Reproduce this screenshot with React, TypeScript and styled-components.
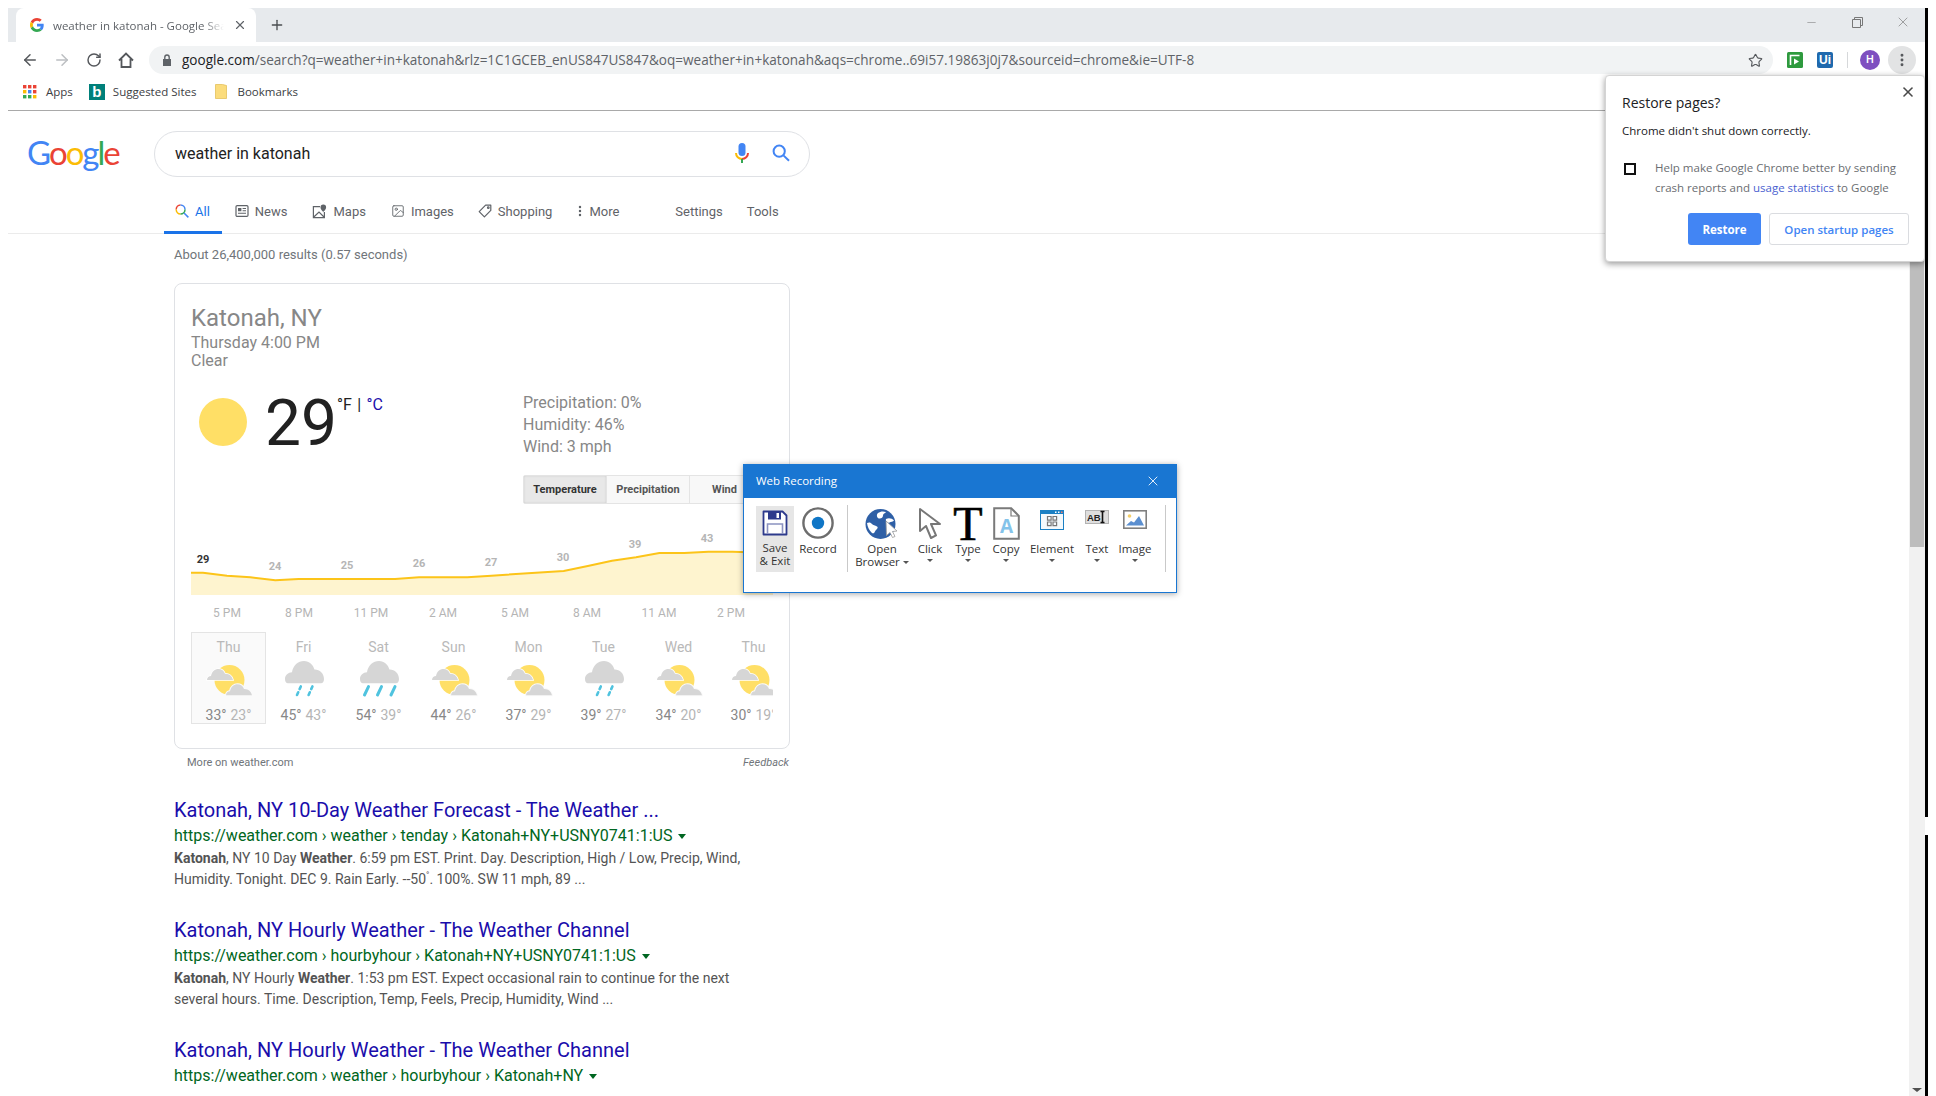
import React from "react";
import styled, { createGlobalStyle } from "styled-components";
import { ArrowLeft, ArrowRight, RotateCw, Star, X, Plus, Minus, MoreVertical, Image as ImageIcon } from "lucide-react";

const GlobalStyle = createGlobalStyle`
  html, body { margin: 0; padding: 0; background: #fff; overflow: hidden; }
  body { font-family: Roboto, "Liberation Sans", sans-serif; }
  * { box-sizing: border-box; }
`;

const UI_FONT = `"Open Sans", "Noto Sans", sans-serif`;

const Screen = styled.div`
  position: relative;
  width: 1936px;
  height: 1096px;
  overflow: hidden;
  display: flex;
  padding: 8px 8px 0 8px;
`;
const Browser = styled.div`
  flex: 1;
  display: flex;
  flex-direction: column;
  min-width: 0;
`;
const Edge = styled.div`
  width: 3px;
  display: flex;
  flex-direction: column;
  gap: 18px;
`;
const EdgeSegment = styled.div<{ $h?: number }>`
  background: #000;
  height: ${p => (p.$h ? `${p.$h}px` : "auto")};
  flex: ${p => (p.$h ? "none" : 1)};
`;

/* tabs */
const TabStrip = styled.div`
  height: 34px;
  background: #e7eaed;
  display: flex;
  padding-left: 8px;
`;
const Tab = styled.div`
  width: 240px;
  height: 34px;
  background: #fff;
  border-radius: 8px 8px 0 0;
  display: flex;
  align-items: center;
  padding-left: 14px;
  gap: 9px;
  font-family: ${UI_FONT};
  font-size: 11.5px;
  color: #5f6368;
`;
const TabTitle = styled.span`
  width: 171px;
  overflow: hidden;
  white-space: nowrap;
  -webkit-mask-image: linear-gradient(90deg, #000 88%, transparent);
  mask-image: linear-gradient(90deg, #000 88%, transparent);
`;
const NewTab = styled.div`
  margin-left: 13px;
  height: 34px;
  display: flex;
  align-items: center;
  color: #4a4d50;
`;
const WindowControls = styled.div`
  margin-left: auto;
  margin-right: -1px;
  display: flex;
  height: 28px;
`;
const WindowButton = styled.div`
  width: 46px;
  display: flex;
  align-items: center;
  justify-content: center;
  color: #777;
`;

/* toolbar */
const Toolbar = styled.div`
  height: 36px;
  display: flex;
  align-items: center;
  padding-left: 6px;
`;
const NavButton = styled.div<{ $dim?: boolean }>`
  width: 32px;
  display: flex;
  justify-content: center;
  color: ${p => (p.$dim ? "#bcbfc2" : "#55585c")};
`;
const Omnibox = styled.div`
  margin-left: 7px;
  width: 1624px;
  height: 28px;
  border-radius: 14px;
  background: #f1f3f4;
  display: flex;
  align-items: center;
  padding: 0 10px 0 13px;
  font-family: ${UI_FONT};
  font-size: 13.55px;
  color: #5f6368;
`;
const Url = styled.div`
  margin-left: 10px;
  white-space: nowrap;
  flex: 1;
  b { font-weight: 400; color: #202124; }
`;
const Extensions = styled.div`
  display: flex;
  align-items: center;
  margin-left: 8px;
`;
const ExtensionSlot = styled.div<{ $w: number }>`
  width: ${p => p.$w}px;
  display: flex;
  justify-content: center;
`;
const UiBadge = styled.div`
  width: 16px;
  height: 16px;
  border-radius: 2px;
  background: #1f69ad;
  color: #fff;
  font: 700 12px/16px "Liberation Sans", sans-serif;
  text-align: center;
`;
const ToolbarDivider = styled.div`
  width: 1px;
  height: 16px;
  background: #d6d8da;
  margin: 0 12px 0 6px;
`;
const Avatar = styled.div`
  width: 20px;
  height: 20px;
  border-radius: 50%;
  background: #7e4fc0;
  color: #fff;
  font: 500 11px/20px Roboto, sans-serif;
  text-align: center;
`;
const MenuButton = styled.div`
  width: 28px;
  height: 28px;
  margin-left: 8px;
  border-radius: 50%;
  background: #e2e3e4;
  display: flex;
  align-items: center;
  justify-content: center;
  color: #55585c;
`;

/* bookmarks */
const BookmarkBar = styled.div`
  height: 33px;
  padding-bottom: 5px;
  border-bottom: 1px solid #a9a9a9;
  display: flex;
  align-items: center;
  font-family: ${UI_FONT};
  font-size: 11.5px;
  color: #3c4043;
  padding-left: 15px;
`;
const Bookmark = styled.div<{ $gap: number; $ml?: number }>`
  display: flex;
  align-items: center;
  gap: ${p => p.$gap}px;
  margin-left: ${p => p.$ml ?? 0}px;
`;
const BingBadge = styled.div`
  width: 16px;
  height: 16px;
  background: #00807a;
  color: #fff;
  font: 700 15px/15px "Liberation Sans", sans-serif;
  text-align: center;
`;

/* page */
const Viewport = styled.div`
  flex: 1;
  display: flex;
  min-height: 0;
`;
const Page = styled.div`
  flex: 1;
  min-width: 0;
  overflow: hidden;
`;
const Scrollbar = styled.div`
  width: 16px;
  background: #f1f1f1;
  padding: 0 1px;
  display: flex;
  flex-direction: column;
`;
const ScrollThumb = styled.div`
  height: 436px;
  background: #bdbdbd;
`;
const ScrollArrow = styled.div`
  margin: auto auto 4px;
  width: 0;
  height: 0;
  border-left: 5px solid transparent;
  border-right: 5px solid transparent;
  border-top: 4px solid #505050;
`;
const Header = styled.div`
  display: flex;
  padding: 20px 0 0 19px;
`;
const Logo = styled.div`
  width: 127px;
  font: 400 33px/46px Lato, sans-serif;
  letter-spacing: -2px;
  margin-top: -2px;
`;
const LogoLetter = styled.span<{ $c: string }>`
  color: ${p => p.$c};
`;
const SearchBox = styled.div`
  width: 656px;
  height: 46px;
  border: 1px solid #dfe1e5;
  border-radius: 23px;
  display: flex;
  align-items: center;
  padding: 0 0 2px 20px;
  font-size: 16px;
  color: #222;
`;
const SearchText = styled.div`
  flex: 1;
`;
const SearchIcons = styled.div`
  display: flex;
  align-items: center;
  gap: 22px;
  padding-right: 19px;
`;
const NavRow = styled.div`
  height: 57px;
  border-bottom: 1px solid #ebebeb;
  display: flex;
  align-items: flex-end;
  padding-left: 156px;
  font-size: 13px;
  color: #5f6368;
`;
const NavItem = styled.div<{ $active?: boolean; $ml?: number }>`
  height: 34px;
  display: flex;
  align-items: center;
  gap: 6px;
  padding: 0 ${p => (p.$active ? "12px" : "0")} 9px ${p => (p.$active ? "11px" : "0")};
  margin-left: ${p => p.$ml ?? 0}px;
  color: ${p => (p.$active ? "#1a73e8" : "#5f6368")};
  border-bottom: 3px solid ${p => (p.$active ? "#1a73e8" : "transparent")};
  margin-bottom: -1px;
  white-space: nowrap;
`;
const Content = styled.div`
  padding-left: 166px;
`;
const Stats = styled.div`
  margin-top: 12px;
  font-size: 13px;
  line-height: 18px;
  color: #70757a;
`;

/* weather card */
const Card = styled.div`
  margin-top: 19px;
  width: 616px;
  height: 466px;
  border: 1px solid #dfe1e5;
  border-radius: 8px;
  padding: 19px 16px 0;
  color: #878787;
`;
const Place = styled.div`
  font-size: 24px;
  line-height: 30px;
`;
const Sub = styled.div<{ $lh: number }>`
  font-size: 16px;
  line-height: ${p => p.$lh}px;
`;
const Current = styled.div`
  margin-top: 22px;
  display: flex;
`;
const NowBlock = styled.div`
  width: 332px;
  display: flex;
  align-items: flex-start;
`;
const Sun = styled.div`
  width: 48px;
  height: 48px;
  margin: 6px 0 0 8px;
  border-radius: 50%;
  background: #ffdf66;
`;
const BigTemp = styled.div`
  margin: 0 0 0 18px;
  font-size: 64px;
  line-height: 64px;
  color: #212121;
`;
const Units = styled.div`
  margin-top: 3px;
  font-size: 16px;
  line-height: 20px;
  word-spacing: 1.5px;
  color: #212121;
  span { color: #1a0dab; }
`;
const Details = styled.div`
  font-size: 16px;
  line-height: 22px;
`;
const MetricTabs = styled.div`
  margin-top: 17px;
  width: 238px;
  height: 29px;
  display: flex;
  border: 1px solid #e4e4e4;
  border-radius: 2px;
`;
const MetricTab = styled.div<{ $active?: boolean; $w: number }>`
  flex: none;
  width: ${p => p.$w}px;
  display: flex;
  align-items: center;
  justify-content: center;
  font-size: 11px;
  font-weight: 700;
  color: ${p => (p.$active ? "#333" : "#555")};
  background: ${p => (p.$active ? "#e8e8e8" : "#f8f8f8")};
  border-right: 1px solid #e4e4e4;
  box-shadow: ${p => (p.$active ? "inset 0 0 2px #c8c8c8" : "none")};
`;
const ChartSvg = styled.svg`
  display: block;
  margin-top: 21px;
`;
const Hours = styled.div`
  margin-top: 5px;
  display: flex;
`;
const Hour = styled.div`
  width: 72px;
  text-align: center;
  font-size: 12px;
  line-height: 16px;
  color: #b5b5b5;
`;
const Forecast = styled.div`
  margin-top: 11px;
  display: flex;
  width: 582px;
  overflow: hidden;
`;
const Day = styled.div<{ $active?: boolean }>`
  flex: none;
  width: 75px;
  height: 92px;
  padding-top: 5px;
  display: flex;
  flex-direction: column;
  align-items: center;
  border: 1px solid ${p => (p.$active ? "#e4e4e4" : "transparent")};
  background: ${p => (p.$active ? "#fafafa" : "transparent")};
  svg { margin-top: 3px; }
`;
const DayName = styled.div`
  font-size: 14px;
  line-height: 18px;
  color: #b9b9b9;
`;
const DayTemps = styled.div`
  margin-top: 10px;
  font-size: 14px;
  line-height: 16px;
  display: flex;
  gap: 4px;
  white-space: nowrap;
`;
const High = styled.span`
  color: #878787;
`;
const Low = styled.span`
  color: #b5b5b5;
`;
const CardFoot = styled.div`
  width: 616px;
  margin-top: 7px;
  padding-left: 13px;
  display: flex;
  justify-content: space-between;
  font-size: 11px;
  line-height: 14px;
  color: #70757a;
  i { padding-right: 1px; }
`;

/* results */
const Results = styled.div`
  margin-top: 29px;
`;
const Result = styled.div`
  margin-bottom: 29px;
`;
const ResultTitle = styled.div`
  font-size: 20px;
  line-height: 22px;
  color: #1a0dab;
`;
const ResultUrl = styled.div`
  margin-top: 5px;
  font-size: 16px;
  line-height: 20px;
  color: #006621;
  display: flex;
  align-items: center;
  gap: 6px;
`;
const Caret = styled.span`
  width: 0;
  height: 0;
  border-left: 4px solid transparent;
  border-right: 4px solid transparent;
  border-top: 5px solid #006621;
`;
const Snippet = styled.div`
  margin-top: 2px;
  font-size: 14px;
  line-height: 21px;
  color: #545454;
  sup { font-size: 9px; line-height: 0; }
`;

/* restore bubble */
const Bubble = styled.div`
  position: absolute;
  left: 1605px;
  top: 75px;
  width: 320px;
  height: 187px;
  background: #fff;
  border: 1px solid #d4d4d4;
  border-radius: 4px;
  box-shadow: 0 2px 6px rgba(0, 0, 0, 0.4);
  padding: 18px 15px 0 16px;
  font-family: ${UI_FONT};
  font-size: 11.5px;
`;
const BubbleClose = styled.div`
  position: absolute;
  right: 8px;
  top: 8px;
  color: #4a4a4a;
  display: flex;
`;
const BubbleTitle = styled.div`
  font-size: 14px;
  line-height: 18px;
  color: #202124;
`;
const BubbleText = styled.div`
  margin-top: 10px;
  line-height: 18px;
  color: #202124;
`;
const ConsentRow = styled.div`
  margin-top: 18px;
  display: flex;
  align-items: flex-start;
  line-height: 20px;
  color: #6a6d71;
  a { color: #4a5fd0; }
`;
const CheckBox = styled.div`
  flex: none;
  width: 12px;
  height: 12px;
  margin: 5px 19px 0 2px;
  border: 2px solid #111;
`;
const BubbleActions = styled.div`
  margin-top: 15px;
  display: flex;
  justify-content: flex-end;
  gap: 8px;
`;
const PrimaryButton = styled.div`
  width: 73px;
  height: 32px;
  background: #4285f4;
  border-radius: 3px;
  color: #fff;
  font-weight: 700;
  display: flex;
  align-items: center;
  justify-content: center;
`;
const SecondaryButton = styled.div`
  width: 140px;
  height: 32px;
  border: 1px solid #dadce0;
  border-radius: 3px;
  color: #4285f4;
  font-weight: 600;
  display: flex;
  align-items: center;
  justify-content: center;
`;

/* recorder window */
const Recorder = styled.div`
  position: absolute;
  left: 743px;
  top: 464px;
  width: 434px;
  height: 129px;
  background: #fff;
  border: 1px solid #1976d2;
  box-shadow: 0 1px 6px rgba(0, 0, 0, 0.35);
  font-family: ${UI_FONT};
`;
const RecorderTitle = styled.div`
  height: 33px;
  background: #1976d2;
  color: #fff;
  font-size: 11.5px;
  display: flex;
  align-items: center;
  justify-content: space-between;
  padding: 0 15px 2px 12px;
`;
const ToolRow = styled.div`
  display: flex;
  padding: 8px 0 0 12px;
`;
const ToolButton = styled.div<{ $w: number; $active?: boolean }>`
  width: ${p => p.$w}px;
  height: 66px;
  display: flex;
  flex-direction: column;
  align-items: center;
  background: ${p => (p.$active ? "#e6e6e6" : "transparent")};
  color: #333;
  font-size: 11.5px;
  line-height: 13px;
  text-align: center;
`;
const ToolIcon = styled.div<{ $h?: number; $top: number }>`
  height: ${p => p.$h ?? 36}px;
  padding-top: ${p => p.$top}px;
  display: flex;
  align-items: flex-start;
  justify-content: center;
`;
const ToolLabel = styled.div`
  white-space: nowrap;
`;
const ToolDivider = styled.div<{ $ml: number; $mr: number }>`
  width: 1px;
  height: 67px;
  background: #c9c9c9;
  margin: -1px ${p => p.$mr}px 0 ${p => p.$ml}px;
`;
const ToolCaret = styled.span<{ $inline?: boolean }>`
  display: ${p => (p.$inline ? "inline-block" : "block")};
  width: 0;
  height: 0;
  border-left: 3.5px solid transparent;
  border-right: 3.5px solid transparent;
  border-top: 3.5px solid #555;
  margin: ${p => (p.$inline ? "0 0 2px 3px" : "4px auto 0")};
`;
const TypeGlyph = styled.div`
  font: 400 48px/36px "Liberation Serif", serif;
  height: 36px;
  color: #000;
  -webkit-text-stroke: 0.6px #000;
`;

const GoogleG = ({ size }: { size: number }) => (
  <svg width={size} height={size} viewBox="0 0 48 48">
    <path fill="#EA4335" d="M24 9.5c3.54 0 6.71 1.22 9.21 3.6l6.85-6.85C35.9 2.38 30.47 0 24 0 14.62 0 6.51 5.38 2.56 13.22l7.98 6.19C12.43 13.72 17.74 9.5 24 9.5z" />
    <path fill="#4285F4" d="M46.98 24.55c0-1.57-.15-3.09-.38-4.55H24v9.02h12.94c-.58 2.96-2.26 5.48-4.78 7.18l7.73 6c4.51-4.18 7.09-10.36 7.09-17.65z" />
    <path fill="#FBBC05" d="M10.53 28.59c-.48-1.45-.76-2.99-.76-4.59s.27-3.14.76-4.59l-7.98-6.19C.92 16.46 0 20.12 0 24c0 3.88.92 7.54 2.56 10.78l7.97-6.19z" />
    <path fill="#34A853" d="M24 48c6.48 0 11.93-2.13 15.89-5.81l-7.73-6c-2.15 1.45-4.92 2.3-8.16 2.3-6.26 0-11.57-4.22-13.47-9.91l-7.98 6.19C6.51 42.62 14.62 48 24 48z" />
  </svg>
);

const HomeIcon = () => (
  <svg width="18" height="18" viewBox="0 0 18 18" fill="none" stroke="#55585c" strokeWidth="1.8">
    <path d="M2 9.5 9 2.5l7 7M4.5 8v8h9V8" strokeLinejoin="miter" />
  </svg>
);
const LockIcon = () => (
  <svg width="10" height="12" viewBox="0 0 10 12">
    <path fill="#5f6368" d="M1 5h8v7H1z" />
    <path fill="none" stroke="#5f6368" strokeWidth="1.4" d="M2.8 5V3.2a2.2 2.2 0 0 1 4.4 0V5" />
  </svg>
);
const AppsIcon = () => {
  const colors = ["#ea4335", "#ea4335", "#ea4335", "#fbbc05", "#4285f4", "#ea4335", "#34a853", "#34a853", "#fbbc05"];
  return (
    <svg width="14" height="14" viewBox="0 0 14 14">
      {colors.map((c, i) => (
        <rect key={i} x={(i % 3) * 5} y={Math.floor(i / 3) * 5} width="3.4" height="3.4" fill={c} />
      ))}
    </svg>
  );
};
const FolderIcon = () => (
  <svg width="12" height="15" viewBox="0 0 12 15">
    <path fill="#fbdc7c" stroke="#e3c05a" strokeWidth="0.8" d="M.5.5h7l4 1v13H.5z" />
  </svg>
);
const StoreIcon = () => (
  <svg width="16" height="16" viewBox="0 0 16 16">
    <rect width="16" height="16" rx="1.5" fill="#2e9a3e" />
    <path fill="none" stroke="#fff" strokeWidth="1.6" d="M3.5 13V3.5h9" />
    <path fill="#fff" d="M7 6.5v6l5-3z" />
  </svg>
);
const MicIcon = () => (
  <svg width="16" height="22" viewBox="0 0 16 22">
    <rect x="4.5" y="1" width="7" height="13" rx="3.5" fill="#4285f4" />
    <path fill="none" stroke="#ea4335" strokeWidth="2" d="M8 17a6 6 0 0 0 6-6" />
    <path fill="none" stroke="#fbbc05" strokeWidth="2" d="M2 11a6 6 0 0 0 6 6" />
    <path stroke="#34a853" strokeWidth="2" d="M8 17v4" />
  </svg>
);
const SearchIcon = () => (
  <svg width="18" height="18" viewBox="0 0 18 18" fill="none" stroke="#4285f4" strokeWidth="2">
    <circle cx="7.2" cy="7.2" r="5.6" />
    <path d="m11.4 11.4 5.6 5.4" />
  </svg>
);
const AllIcon = () => (
  <svg width="14" height="14" viewBox="0 0 14 14" fill="none" strokeWidth="1.5">
    <path stroke="#ea4335" d="M1.2 5.5A4.5 4.5 0 0 1 5.5 1" />
    <path stroke="#4285f4" d="M5.5 1a4.5 4.5 0 0 1 4.5 4.5" />
    <path stroke="#fbbc05" d="M1.2 5.5A4.5 4.5 0 0 0 5.5 10" />
    <path stroke="#34a853" d="M5.5 10A4.5 4.5 0 0 0 10 5.5" />
    <path stroke="#4285f4" d="m9 9 4.4 4.4" />
  </svg>
);
const NewsIcon = () => (
  <svg width="14" height="14" viewBox="0 0 14 14" fill="none" stroke="#5f6368" strokeWidth="1.2">
    <rect x="1" y="1.6" width="12" height="10.8" rx="1.2" />
    <path fill="#5f6368" stroke="none" d="M3 4h3.4v3.2H3zM7.6 4H11v1H7.6zM7.6 6.2H11v1H7.6zM3 8.8h8v1H3z" />
  </svg>
);
const MapsIcon = () => (
  <svg width="15" height="15" viewBox="0 0 15 15" fill="none" stroke="#5f6368" strokeWidth="1.2">
    <path d="M8 2.6H1.4v11h11V8M1.8 13 7 8l5 5" />
    <path fill="#5f6368" stroke="none" d="M11.3.6a2.8 2.8 0 0 0-2.8 2.8c0 1.9 2.8 4.4 2.8 4.4s2.8-2.5 2.8-4.4A2.8 2.8 0 0 0 11.3.6z" />
  </svg>
);
const TagIcon = () => (
  <svg width="14" height="14" viewBox="0 0 14 14" fill="none" stroke="#5f6368" strokeWidth="1.2">
    <path d="M7.6 1.2h5.2v5.2L6.4 12.8 1.2 7.6z" strokeLinejoin="round" />
    <circle cx="10.3" cy="3.7" r="0.8" />
  </svg>
);

const cloudPath = "M0 12.6c0-2.6 2-4 4-4 .8-4.4 4-7 7.4-7 3.2 0 5.6 2 6.6 4.8 4-.4 7.2 2.6 8 6.2z";

const PartlyCloudy = () => (
  <svg width="48" height="38" viewBox="0 0 48 38">
    <circle cx="24.5" cy="21" r="15" fill="#ffdf66" />
    <path d={cloudPath} transform="translate(2 8.4)" fill="#d6d6d6" stroke="#fff" strokeWidth="1.6" paintOrder="stroke" />
    <path d={cloudPath} transform="translate(21 23.6)" fill="#d6d6d6" stroke="#fafafa" strokeWidth="2" paintOrder="stroke" />
  </svg>
);
const RainCloud = ({ drops }: { drops: number }) => (
  <svg width="48" height="38" viewBox="0 0 48 38">
    <path fill="#d6d6d6" d="M5 20c0-4 3.2-6.6 7-6.8C13 6.6 18 2 24 2c5.4 0 9 3.6 10.4 8.4C39.6 10.2 44 14.2 44 20c0 2.7-1.3 4.3-3 4.3H8c-2 0-3-2-3-4.3z" />
    {drops === 2 ? (
      <g stroke="#4fc3df" strokeWidth="2.6" strokeLinecap="round" strokeDasharray="3 3.4">
        <path d="M17 36l4-9" />
        <path d="M28.6 36l4-9" />
      </g>
    ) : (
      <g stroke="#4fc3df" strokeWidth="3" strokeLinecap="round">
        <path d="M9.5 36l4-8.4" />
        <path d="M22.5 36l4-8.4" />
        <path d="M36 36l4-8.4" />
      </g>
    )}
  </svg>
);

const chartPoints: [number, number][] = [
  [0, 47.7], [12, 47.7], [36, 50.7], [59.4, 52.3], [84.3, 55.3], [107.6, 54], [204, 54], [228, 52.3],
  [276.3, 52.3], [300.4, 50.7], [372.7, 46], [396.8, 41], [421, 35.7], [445, 32.3], [468.4, 28], [493.3, 28],
  [517.4, 26.7], [541.5, 26.7], [582, 28],
];
const chartLabels: [string, number, number][] = [
  ["24", 84, 45], ["25", 156, 44], ["26", 228, 42], ["27", 300, 41], ["30", 372, 36], ["39", 444, 23], ["43", 516, 17],
];

const TempChart = () => {
  const line = chartPoints.map(([x, y]) => `${x},${y}`).join(" ");
  return (
    <ChartSvg width="582" height="75" viewBox="0 0 582 75">
      <polygon points={`0,70 ${line} 582,70`} fill="#fef4cf" />
      <polyline points={line} fill="none" stroke="#fcc419" strokeWidth="2" />
      <text x="12" y="38" fontSize="11" fontWeight="700" textAnchor="middle" fill="#333">29</text>
      {chartLabels.map(([t, x, y]) => (
        <text key={t} x={x} y={y} fontSize="11" fontWeight="700" textAnchor="middle" fill="#b5b5b5">{t}</text>
      ))}
    </ChartSvg>
  );
};

const hours = ["5 PM", "8 PM", "11 PM", "2 AM", "5 AM", "8 AM", "11 AM", "2 PM"];
const days: { name: string; hi: number; lo: number; drops?: number }[] = [
  { name: "Thu", hi: 33, lo: 23 },
  { name: "Fri", hi: 45, lo: 43, drops: 2 },
  { name: "Sat", hi: 54, lo: 39, drops: 3 },
  { name: "Sun", hi: 44, lo: 26 },
  { name: "Mon", hi: 37, lo: 29 },
  { name: "Tue", hi: 39, lo: 27, drops: 2 },
  { name: "Wed", hi: 34, lo: 20 },
  { name: "Thu", hi: 30, lo: 19 },
];

const SaveIcon = () => (
  <svg width="26" height="26" viewBox="0 0 26 26" fill="none">
    <path d="M1.5 1.5h19l4 4v19h-23z" fill="#fff" stroke="#2d3a8c" strokeWidth="1.8" strokeLinejoin="round" />
    <path d="M6 1.5h13v8H6z" fill="#2d3a8c" />
    <path d="M14.5 3H17v5h-2.5z" fill="#fff" />
    <path d="M5.5 24V14h15v10" stroke="#8b92c0" strokeWidth="1.6" />
  </svg>
);
const RecordIcon = () => (
  <svg width="32" height="32" viewBox="0 0 32 32">
    <circle cx="16" cy="16" r="14.6" fill="none" stroke="#6d6d6d" strokeWidth="2.4" />
    <circle cx="16" cy="16" r="6.2" fill="#0f76c6" />
  </svg>
);
const GlobeIcon = () => (
  <svg width="34" height="32" viewBox="0 0 34 32">
    <circle cx="15.5" cy="16" r="15" fill="#2e5fa6" />
    <path fill="#fff" d="M2 15c2-1 4-.5 5 1s3 1 5 2.5-1 3-2 5-2 2.5-3.5 1C4 22 2.5 19 2 15zM13 5c2-1.5 5-2 8-1-1 1.5-3 1.5-3 3.5s-2 3.5-4 3-3-4-1-5.500zM21 11c3-1.500 6-.5 8 1.500-1 1.500-3 1-4.500 2s-4.500-1.500-3.500-3.500z" />
    <path fill="#fff" stroke="#9a9a9a" strokeWidth="0.8" d="M21 13l11 10-4.500.5 2.500 5-2.500 1-2.500-5-3.500 3z" />
  </svg>
);
const CursorIcon = () => (
  <svg width="24" height="33" viewBox="0 0 24 33">
    <path fill="#fff" stroke="#777" strokeWidth="2" strokeLinejoin="round" d="M2 2v22l6-5 5 12 5-2.600-5-11.400h9z" />
  </svg>
);
const CopyIcon = () => (
  <svg width="27" height="33" viewBox="0 0 27 33">
    <path fill="#fff" stroke="#7a7a7a" strokeWidth="2" d="M1.2 1.2h17l7.600 7.600v23H1.2z" />
    <path fill="none" stroke="#7a7a7a" strokeWidth="1.2" d="M18 1.5V9h7.500" />
    <text x="13.5" y="26" fontSize="19" fontWeight="700" fontFamily="Open Sans, sans-serif" textAnchor="middle" fill="#84c3ea">A</text>
  </svg>
);
const ElementIcon = () => (
  <svg width="24" height="20" viewBox="0 0 24 20">
    <rect width="24" height="20" fill="#1b80c4" />
    <rect x="1" y="4" width="22" height="15" fill="#f4f9fc" />
    <path fill="#fff" d="M15 1.500h1.500V3H15zM18 1.500h1.500V3H18z" />
    <path fill="#f0756a" d="M21 1.500h1.500V3H21z" />
    <path fill="none" stroke="#777" strokeWidth="1.2" d="M7.500 6.500h3.600v3.600H7.500zM13 6.500h3.600v3.600H13zM7.500 12h3.600v3.600H7.500zM13 12h3.600v3.600H13z" />
  </svg>
);
const TextIcon = () => (
  <svg width="24" height="14" viewBox="0 0 24 14">
    <rect x="0.5" y="0.5" width="23" height="13" fill="#dedede" stroke="#b3b3b3" />
    <text x="2" y="11" fontSize="9.5" fontWeight="700" fontFamily="Liberation Sans, sans-serif" fill="#222">AB</text>
    <path stroke="#111" strokeWidth="1.6" fill="none" d="M15.500 1.500h4M15.500 12.500h4M17.500 1.500v11" />
  </svg>
);
const PictureIcon = () => (
  <svg width="24" height="19" viewBox="0 0 24 19">
    <rect x="0.8" y="0.8" width="22.4" height="17.4" fill="#fff" stroke="#808080" strokeWidth="1.6" />
    <circle cx="6.5" cy="6" r="1.8" fill="#f4cf6a" />
    <path fill="#5b8fd0" d="M3 15.500 8 11l3 1.500L16 6l5 9.500z" />
  </svg>
);

export default function App() {
  return (
    <>
      <GlobalStyle />
      <Screen>
        <Browser>
          <TabStrip>
            <Tab>
              <GoogleG size={14} />
              <TabTitle>weather in katonah - Google Search</TabTitle>
              <X size={14} color="#5f6368" strokeWidth={2} />
            </Tab>
            <NewTab>
              <Plus size={16} strokeWidth={2} />
            </NewTab>
            <WindowControls>
              <WindowButton><Minus size={13} strokeWidth={1} /></WindowButton>
              <WindowButton>
                <svg width="11" height="11" viewBox="0 0 11 11" fill="none" stroke="#777">
                  <path d="M.5 2.500h8v8h-8zM2.500 2.500v-2h8v8h-2" />
                </svg>
              </WindowButton>
              <WindowButton><X size={16} strokeWidth={1} /></WindowButton>
            </WindowControls>
          </TabStrip>
          <Toolbar>
            <NavButton><ArrowLeft size={18} strokeWidth={2} /></NavButton>
            <NavButton $dim><ArrowRight size={18} strokeWidth={2} /></NavButton>
            <NavButton><RotateCw size={16} strokeWidth={2.2} /></NavButton>
            <NavButton><HomeIcon /></NavButton>
            <Omnibox>
              <LockIcon />
              <Url>
                <b>google.com</b>/search?q=weather+in+katonah&amp;rlz=1C1GCEB_enUS847US847&amp;oq=weather+in+katonah&amp;aqs=chrome..69i57.19863j0j7&amp;sourceid=chrome&amp;ie=UTF-8
              </Url>
              <Star size={15} color="#55585c" strokeWidth={1.8} />
            </Omnibox>
            <Extensions>
              <ExtensionSlot $w={28}><StoreIcon /></ExtensionSlot>
              <ExtensionSlot $w={32}><UiBadge>Ui</UiBadge></ExtensionSlot>
              <ToolbarDivider />
              <Avatar>H</Avatar>
              <MenuButton><MoreVertical size={16} strokeWidth={2.4} /></MenuButton>
            </Extensions>
          </Toolbar>
          <BookmarkBar>
            <Bookmark $gap={9}><AppsIcon />Apps</Bookmark>
            <Bookmark $gap={8} $ml={16}><BingBadge>b</BingBadge>Suggested Sites</Bookmark>
            <Bookmark $gap={10} $ml={19}><FolderIcon />Bookmarks</Bookmark>
          </BookmarkBar>
          <Viewport>
            <Page>
              <Header>
                <Logo>
                  <LogoLetter $c="#4285f4">G</LogoLetter>
                  <LogoLetter $c="#ea4335">o</LogoLetter>
                  <LogoLetter $c="#fbbc05">o</LogoLetter>
                  <LogoLetter $c="#4285f4">g</LogoLetter>
                  <LogoLetter $c="#34a853">l</LogoLetter>
                  <LogoLetter $c="#ea4335">e</LogoLetter>
                </Logo>
                <SearchBox>
                  <SearchText>weather in katonah</SearchText>
                  <SearchIcons>
                    <MicIcon />
                    <SearchIcon />
                  </SearchIcons>
                </SearchBox>
              </Header>
              <NavRow>
                <NavItem $active><AllIcon />All</NavItem>
                <NavItem $ml={13}><NewsIcon />News</NavItem>
                <NavItem $ml={25}><MapsIcon />Maps</NavItem>
                <NavItem $ml={25}><ImageIcon size={14} strokeWidth={1.5} />Images</NavItem>
                <NavItem $ml={24}><TagIcon />Shopping</NavItem>
                <NavItem $ml={21}><MoreVertical size={14} strokeWidth={2.2} style={{ marginRight: -4 }} />More</NavItem>
                <NavItem $ml={56}>Settings</NavItem>
                <NavItem $ml={24}>Tools</NavItem>
              </NavRow>
              <Content>
                <Stats>About 26,400,000 results (0.57 seconds)</Stats>
                <Card>
                  <Place>Katonah, NY</Place>
                  <Sub $lh={19}>Thursday 4:00 PM</Sub>
                  <Sub $lh={18}>Clear</Sub>
                  <Current>
                    <NowBlock>
                      <Sun />
                      <BigTemp>29</BigTemp>
                      <Units>°F | <span>°C</span></Units>
                    </NowBlock>
                    <div>
                      <Details>
                        <div>Precipitation: 0%</div>
                        <div>Humidity: 46%</div>
                        <div>Wind: 3 mph</div>
                      </Details>
                      <MetricTabs>
                        <MetricTab $active $w={83}>Temperature</MetricTab>
                        <MetricTab $w={83}>Precipitation</MetricTab>
                        <MetricTab $w={70}>Wind</MetricTab>
                      </MetricTabs>
                    </div>
                  </Current>
                  <TempChart />
                  <Hours>
                    {hours.map(h => <Hour key={h}>{h}</Hour>)}
                  </Hours>
                  <Forecast>
                    {days.map((d, i) => (
                      <Day key={i} $active={i === 0}>
                        <DayName>{d.name}</DayName>
                        {d.drops ? <RainCloud drops={d.drops} /> : <PartlyCloudy />}
                        <DayTemps><High>{d.hi}°</High><Low>{d.lo}°</Low></DayTemps>
                      </Day>
                    ))}
                  </Forecast>
                </Card>
                <CardFoot>
                  <span>More on weather.com</span>
                  <i>Feedback</i>
                </CardFoot>
                <Results>
                  <Result>
                    <ResultTitle>Katonah, NY 10-Day Weather Forecast - The Weather ...</ResultTitle>
                    <ResultUrl>https://weather.com › weather › tenday › Katonah+NY+USNY0741:1:US <Caret /></ResultUrl>
                    <Snippet>
                      <b>Katonah</b>, NY 10 Day <b>Weather</b>. 6:59 pm EST. Print. Day. Description, High / Low, Precip, Wind,<br />
                      Humidity. Tonight. DEC 9. Rain Early. --50<sup>°</sup>. 100%. SW 11 mph, 89 ...
                    </Snippet>
                  </Result>
                  <Result>
                    <ResultTitle>Katonah, NY Hourly Weather - The Weather Channel</ResultTitle>
                    <ResultUrl>https://weather.com › hourbyhour › Katonah+NY+USNY0741:1:US <Caret /></ResultUrl>
                    <Snippet>
                      <b>Katonah</b>, NY Hourly <b>Weather</b>. 1:53 pm EST. Expect occasional rain to continue for the next<br />
                      several hours. Time. Description, Temp, Feels, Precip, Humidity, Wind ...
                    </Snippet>
                  </Result>
                  <Result>
                    <ResultTitle>Katonah, NY Hourly Weather - The Weather Channel</ResultTitle>
                    <ResultUrl>https://weather.com › weather › hourbyhour › Katonah+NY <Caret /></ResultUrl>
                  </Result>
                </Results>
              </Content>
            </Page>
            <Scrollbar>
              <ScrollThumb />
              <ScrollArrow />
            </Scrollbar>
          </Viewport>
        </Browser>
        <Edge>
          <EdgeSegment $h={809} />
          <EdgeSegment />
        </Edge>

        <Bubble>
          <BubbleClose><X size={16} strokeWidth={2.4} /></BubbleClose>
          <BubbleTitle>Restore pages?</BubbleTitle>
          <BubbleText>Chrome didn't shut down correctly.</BubbleText>
          <ConsentRow>
            <CheckBox />
            <div>
              Help make Google Chrome better by sending<br />
              crash reports and <a>usage statistics</a> to Google
            </div>
          </ConsentRow>
          <BubbleActions>
            <PrimaryButton>Restore</PrimaryButton>
            <SecondaryButton>Open startup pages</SecondaryButton>
          </BubbleActions>
        </Bubble>

        <Recorder>
          <RecorderTitle>
            Web Recording
            <X size={16} strokeWidth={1.3} />
          </RecorderTitle>
          <ToolRow>
            <ToolButton $w={38} $active>
              <ToolIcon $h={35} $top={4}><SaveIcon /></ToolIcon>
              <ToolLabel>Save<br />&amp; Exit</ToolLabel>
            </ToolButton>
            <ToolButton $w={48}>
              <ToolIcon $top={1}><RecordIcon /></ToolIcon>
              <ToolLabel>Record</ToolLabel>
            </ToolButton>
            <ToolDivider $ml={5} $mr={3} />
            <ToolButton $w={62}>
              <ToolIcon $top={2}><GlobeIcon /></ToolIcon>
              <ToolLabel>Open<br />Browser<ToolCaret $inline /></ToolLabel>
            </ToolButton>
            <ToolButton $w={34}>
              <ToolIcon $top={1}><CursorIcon /></ToolIcon>
              <ToolLabel>Click</ToolLabel>
              <ToolCaret />
            </ToolButton>
            <ToolButton $w={42}>
              <ToolIcon $top={0}><TypeGlyph>T</TypeGlyph></ToolIcon>
              <ToolLabel>Type</ToolLabel>
              <ToolCaret />
            </ToolButton>
            <ToolButton $w={34}>
              <ToolIcon $top={1}><CopyIcon /></ToolIcon>
              <ToolLabel>Copy</ToolLabel>
              <ToolCaret />
            </ToolButton>
            <ToolButton $w={58}>
              <ToolIcon $top={4}><ElementIcon /></ToolIcon>
              <ToolLabel>Element</ToolLabel>
              <ToolCaret />
            </ToolButton>
            <ToolButton $w={32}>
              <ToolIcon $top={4}><TextIcon /></ToolIcon>
              <ToolLabel>Text</ToolLabel>
              <ToolCaret />
            </ToolButton>
            <ToolButton $w={44}>
              <ToolIcon $top={4}><PictureIcon /></ToolIcon>
              <ToolLabel>Image</ToolLabel>
              <ToolCaret />
            </ToolButton>
            <ToolDivider $ml={8} $mr={0} />
          </ToolRow>
        </Recorder>
      </Screen>
    </>
  );
}
